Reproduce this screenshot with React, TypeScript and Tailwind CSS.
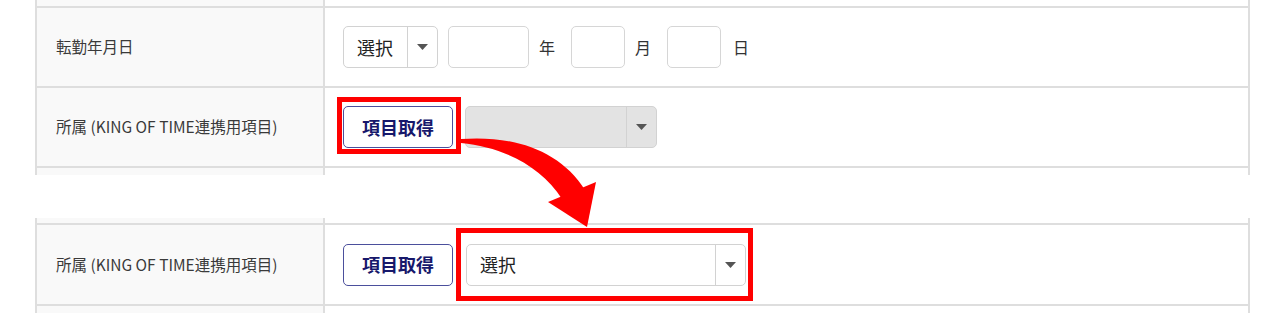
import React from 'react'

const font = { fontFamily: '"Noto Sans CJK JP", "Noto Sans", sans-serif' }

const Caret = () => (
    <svg width="11" height="6" viewBox="0 0 11 6">
        <path d="M0 0 L11 0 L5.5 6 Z" fill="#555555" />
    </svg>
)

const SelectBox = ({ text, width, disabled }: { text?: string; width: string; disabled?: boolean }) => (
    <div
        className={`flex flex-row h-[42px] rounded-[5px] border border-[#d2d2d2] ${width} ${
            disabled ? 'bg-[#e3e3e3]' : 'bg-white'
        }`}
    >
        <div className="flex-1 flex items-center pl-[13px] text-[18px] text-[#222]">{text}</div>
        <div className="w-[30px] flex items-center justify-center border-l border-[#d2d2d2]">
            <Caret />
        </div>
    </div>
)

const FetchButton = () => (
    <div className="h-[42px] w-[110px] rounded-[5px] border border-[#4b4f9c] bg-white flex items-center justify-center text-[18px] font-bold text-[#17186b]">
        項目取得
    </div>
)

const Label = ({ children }: { children: React.ReactNode }) => (
    <div className="bg-[#f9f9f9] border-r-2 border-[#dedede] flex items-center pl-[19px] text-[15.5px] text-[#3a3a3a]">
        {children}
    </div>
)

const DateInput = ({ width }: { width: string }) => (
    <div className={`h-[42px] ${width} rounded-[5px] border border-[#d6d6d6] bg-white`} />
)

const App = () => {
    return (
        <div className="relative w-[1281px] h-[313px] overflow-hidden bg-white" style={font}>
            {/* upper table */}
            <div className="ml-[35px] w-[1215px] border-x-2 border-[#dedede]">
                <div className="grid grid-cols-[288px_1fr] h-[6px]">
                    <div className="bg-[#f9f9f9] border-r-2 border-[#dedede]" />
                    <div />
                </div>
                <div className="grid grid-cols-[288px_1fr] h-[80px] border-t-2 border-[#dedede]">
                    <Label>転勤年月日</Label>
                    <div className="flex flex-row items-center pl-[18px]">
                        <div className="flex flex-row h-[42px] w-[95px] rounded-[5px] border border-[#d2d2d2] bg-white">
                            <div className="flex-1 flex items-center pl-[13px] text-[18px] text-[#222]">選択</div>
                            <div className="w-[30px] flex items-center justify-center border-l border-[#d2d2d2]">
                                <Caret />
                            </div>
                        </div>
                        <div className="ml-[10px]">
                            <DateInput width="w-[81px]" />
                        </div>
                        <span className="ml-[10px] text-[16px] text-[#333]">年</span>
                        <div className="ml-[16px]">
                            <DateInput width="w-[54px]" />
                        </div>
                        <span className="ml-[10px] text-[16px] text-[#333]">月</span>
                        <div className="ml-[16px]">
                            <DateInput width="w-[54px]" />
                        </div>
                        <span className="ml-[12px] text-[16px] text-[#333]">日</span>
                    </div>
                </div>
                <div className="grid grid-cols-[288px_1fr] h-[80px] border-t-2 border-[#dedede]">
                    <Label>所属 (KING OF TIME連携用項目)</Label>
                    <div className="flex flex-row items-center pl-[18px]">
                        <div className="relative">
                            <FetchButton />
                            <div className="absolute -left-[6px] -right-[8px] -top-[9px] -bottom-[6px] border-[5px] border-[#ff0000]" />
                        </div>
                        <div className="ml-[12px]">
                            <SelectBox width="w-[192px]" disabled />
                        </div>
                    </div>
                </div>
                <div className="grid grid-cols-[288px_1fr] h-[9px] border-t-2 border-[#dedede]">
                    <div className="bg-[#f9f9f9] border-r-2 border-[#dedede]" />
                    <div />
                </div>
            </div>

            {/* lower table */}
            <div className="mt-[43px] ml-[35px] w-[1215px] border-x-2 border-[#dedede]">
                <div className="grid grid-cols-[288px_1fr] h-[5px]">
                    <div className="bg-[#f9f9f9] border-r-2 border-[#dedede]" />
                    <div />
                </div>
                <div className="grid grid-cols-[288px_1fr] h-[81px] border-t-2 border-[#dedede]">
                    <Label>所属 (KING OF TIME連携用項目)</Label>
                    <div className="flex flex-row items-center pl-[18px]">
                        <FetchButton />
                        <div className="relative ml-[13px]">
                            <SelectBox text="選択" width="w-[280px]" />
                            <div className="absolute -left-[10px] -right-[7px] -top-[16px] -bottom-[15px] border-[5px] border-[#ff0000]" />
                        </div>
                    </div>
                </div>
                <div className="grid grid-cols-[288px_1fr] h-[20px] border-t-2 border-[#dedede]">
                    <div className="bg-[#f9f9f9] border-r-2 border-[#dedede]" />
                    <div />
                </div>
            </div>

            {/* curved arrow annotation */}
            <svg className="absolute left-0 top-0 pointer-events-none" width="1281" height="313">
                <path
                    d="M461 139 C512 135 560 150 585 190 L562 199 C541 166 503 147 461 143 Z"
                    fill="#ff0000"
                />
                <path d="M548 202 L596 182 L587 227 Z" fill="#ff0000" />
            </svg>
        </div>
    )
}

export default App
